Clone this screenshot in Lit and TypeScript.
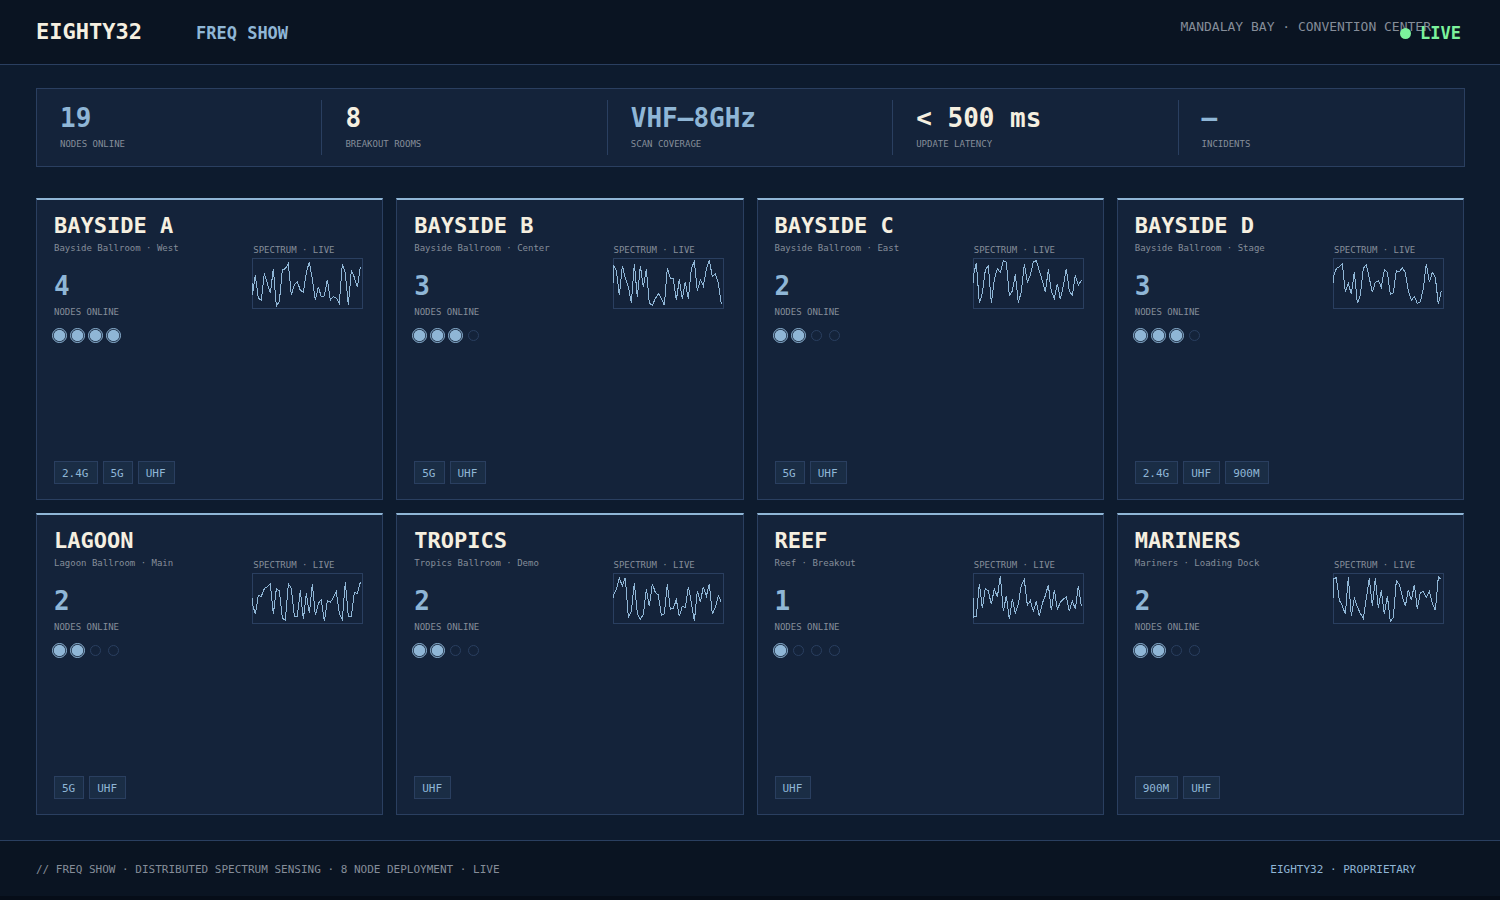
import { LitElement, html, css, svg } from "lit";
import { customElement, property } from "lit/decorators.js";

interface Room {
  name: string;
  place: string;
  nodes: number;
  bands: string[];
  samples: number[];
}

const NODE_SLOTS = 4;

const STATS = [
  { value: "19", label: "NODES ONLINE", tone: "blue" },
  { value: "8", label: "BREAKOUT ROOMS", tone: "cream" },
  { value: "VHF—8GHz", label: "SCAN COVERAGE", tone: "blue" },
  { value: "< 500 ms", label: "UPDATE LATENCY", tone: "cream" },
  { value: "—", label: "INCIDENTS", tone: "blue" },
];

const ROOMS: Room[] = [
  {
    name: "BAYSIDE A",
    place: "Bayside Ballroom · West",
    nodes: 4,
    bands: ["2.4G", "5G", "UHF"],
    samples: [165, 106, 175, 181, 100, 130, 160, 86, 198, 185, 90, 86, 71, 165, 134, 125, 151, 157, 98, 65, 118, 181, 140, 171, 168, 119, 180, 170, 174, 190, 71, 100, 196, 90, 112, 142, 80],
  },
  {
    name: "BAYSIDE B",
    place: "Bayside Ballroom · Center",
    nodes: 3,
    bands: ["5G", "UHF"],
    samples: [76, 91, 166, 77, 115, 140, 188, 71, 172, 77, 142, 88, 190, 196, 176, 160, 176, 196, 83, 115, 116, 181, 118, 178, 125, 178, 85, 65, 153, 119, 138, 88, 61, 110, 101, 130, 193],
  },
  {
    name: "BAYSIDE C",
    place: "Bayside Ballroom · East",
    nodes: 2,
    bands: ["5G", "UHF"],
    samples: [108, 68, 190, 160, 90, 77, 190, 118, 86, 97, 62, 66, 166, 153, 103, 188, 155, 73, 127, 105, 66, 62, 92, 122, 157, 88, 155, 175, 131, 178, 137, 86, 154, 166, 106, 136, 121],
  },
  {
    name: "BAYSIDE D",
    place: "Bayside Ballroom · Stage",
    nodes: 3,
    bands: ["2.4G", "UHF", "900M"],
    samples: [110, 86, 80, 71, 157, 130, 163, 95, 190, 165, 85, 74, 115, 157, 127, 122, 142, 89, 97, 163, 158, 92, 95, 83, 98, 152, 181, 170, 190, 186, 145, 71, 127, 97, 112, 193, 152],
  },
  {
    name: "LAGOON",
    place: "Lagoon Ballroom · Main",
    nodes: 2,
    bands: ["5G", "UHF"],
    samples: [145, 178, 121, 124, 101, 95, 86, 178, 101, 107, 190, 196, 86, 100, 184, 184, 106, 193, 115, 175, 86, 181, 145, 134, 199, 137, 142, 128, 110, 175, 194, 80, 184, 184, 112, 116, 82],
  },
  {
    name: "TROPICS",
    place: "Tropics Ballroom · Demo",
    nodes: 2,
    bands: ["UHF"],
    samples: [120, 103, 70, 92, 68, 187, 170, 83, 175, 193, 178, 103, 154, 86, 112, 120, 181, 176, 88, 163, 160, 134, 184, 154, 157, 95, 142, 199, 107, 142, 95, 124, 86, 178, 157, 122, 142],
  },
  {
    name: "REEF",
    place: "Reef · Breakout",
    nodes: 1,
    bands: ["UHF"],
    samples: [187, 184, 86, 160, 100, 108, 148, 101, 127, 62, 169, 122, 193, 131, 175, 148, 90, 74, 151, 137, 169, 139, 184, 145, 122, 89, 166, 104, 163, 142, 133, 125, 169, 137, 163, 92, 152],
  },
  {
    name: "MARINERS",
    place: "Mariners · Loading Dock",
    nodes: 2,
    bands: ["900M", "UHF"],
    samples: [72, 68, 136, 152, 178, 65, 184, 130, 155, 175, 190, 130, 70, 154, 70, 160, 106, 178, 122, 199, 187, 77, 88, 124, 154, 104, 136, 89, 163, 112, 110, 128, 110, 145, 166, 66, 73],
  },
];

@customElement("room-card")
class RoomCard extends LitElement {
  @property({ attribute: false }) room!: Room;

  static styles = css`
    :host {
      display: flex;
      flex-direction: column;
      box-sizing: border-box;
      min-width: 0;
      padding: 13px 19px 15px 17px;
      background: #14233a;
      border: 1px solid #2a3f60;
      border-top: 2px solid #8fb6d6;
    }
    .body {
      display: flex;
      justify-content: space-between;
      flex: 1;
    }
    .name {
      margin: 0;
      font-size: 22px;
      line-height: 26px;
      font-weight: 700;
      color: #f5efe0;
    }
    .place,
    .caption {
      margin: 0;
      font-size: 9px;
      line-height: 12px;
      color: #858d99;
    }
    .place {
      margin-top: 3px;
    }
    .count {
      margin: 17px 0 0;
      font-size: 26px;
      line-height: 30px;
      font-weight: 700;
      color: #8fb6d6;
    }
    .count + .caption {
      margin-top: 5px;
    }
    .dots {
      display: block;
      margin-top: 10px;
      overflow: visible;
    }
    .on {
      fill: #8fb6d6;
    }
    .ring {
      fill: none;
      stroke: #8fb6d6;
    }
    .off {
      fill: none;
      stroke: #2a3f60;
    }
    .spectrum {
      flex: none;
      margin: 31px 0 0;
    }
    .spectrum .caption {
      padding-left: 1px;
    }
    .plot {
      display: block;
      box-sizing: border-box;
      width: 111px;
      height: 51px;
      margin-top: 2px;
      border: 1px solid #2a3f60;
      overflow: visible;
    }
    .trace {
      fill: none;
      stroke: #8fb6d6;
      stroke-width: 3;
      shape-rendering: crispEdges;
    }
    .bands {
      display: flex;
      flex-wrap: wrap;
      gap: 5px;
      margin: 0;
      padding: 0;
      list-style: none;
    }
    .band {
      padding: 5px 8px 3px 7px;
      font-size: 11px;
      line-height: 13px;
      color: #8fb6d6;
      background: #1a2d45;
      border: 1px solid #2a3f60;
    }
  `;

  render() {
    const { name, place, nodes, bands, samples } = this.room;
    const trace = ["0,130", ...samples.map((y, i) => `${i * 9},${y}`)].join(" ");
    return html`
      <div class="body">
        <div>
          <h2 class="name">${name}</h2>
          <p class="place">${place}</p>
          <p class="count">${nodes}</p>
          <p class="caption">NODES ONLINE</p>
          <svg class="dots" width="66" height="15" role="img" aria-label="${nodes} of ${NODE_SLOTS} nodes">
            ${Array.from({ length: NODE_SLOTS }, (_, i) => {
              const cx = 5.5 + i * 18;
              return i < nodes
                ? svg`<circle class="on" cx=${cx} cy="7.5" r="5.8"></circle>
                    <circle class="ring" cx=${cx} cy="7.5" r="7"></circle>`
                : svg`<circle class="off" cx=${cx} cy="7.5" r="5"></circle>`;
            })}
          </svg>
        </div>
        <figure class="spectrum">
          <figcaption class="caption">SPECTRUM · LIVE</figcaption>
          <svg class="plot" viewBox="2 57 327 147" aria-hidden="true">
            <polyline class="trace" points=${trace}></polyline>
          </svg>
        </figure>
      </div>
      <ul class="bands">
        ${bands.map((band) => html`<li class="band">${band}</li>`)}
      </ul>
    `;
  }
}

@customElement("app-root")
class AppRoot extends LitElement {
  static styles = css`
    :host {
      display: flex;
      flex-direction: column;
      box-sizing: border-box;
      min-height: 100vh;
      background: #0d1b2e;
      font-family: "DejaVu Sans Mono", monospace;
    }
    .top {
      position: relative;
      display: flex;
      align-items: center;
      height: 64px;
      padding: 0 69px 0 36px;
      background: #0a1422;
      border-bottom: 1px solid #2a3f60;
    }
    .brand {
      margin: 0;
      font-size: 22px;
      line-height: 26px;
      font-weight: 700;
      color: #f5efe0;
    }
    .product {
      margin-left: 54px;
      padding-top: 2px;
      font-size: 17px;
      line-height: 20px;
      font-weight: 700;
      color: #8fb6d6;
    }
    .venue {
      margin-left: auto;
      padding-bottom: 10px;
      font-size: 13px;
      line-height: 16px;
      color: #858d99;
    }
    .live {
      position: absolute;
      top: 23px;
      right: 39px;
      display: flex;
      align-items: center;
      gap: 9px;
      font-size: 17px;
      line-height: 20px;
      font-weight: 700;
      color: #7cf29c;
    }
    .lamp {
      width: 11px;
      height: 11px;
      border-radius: 50%;
      background: #7cf29c;
    }
    .main {
      display: flex;
      flex-direction: column;
      flex: 1;
      gap: 31px;
      padding: 23px 35px 25px 36px;
    }
    .stats {
      display: grid;
      grid-template-columns: repeat(5, 1fr);
      margin: 0;
      padding: 11px 0;
      background: #14233a;
      border: 1px solid #2a3f60;
    }
    .stat {
      display: flex;
      flex-direction: column-reverse;
      justify-content: flex-end;
      gap: 5px;
      box-sizing: border-box;
      height: 55px;
      padding: 3px 0 0 23px;
      border-right: 1px solid #2a3f60;
    }
    .stat:last-child {
      border-right: 0;
    }
    .stat-label {
      font-size: 9px;
      line-height: 12px;
      color: #858d99;
    }
    .stat-value {
      margin: 0;
      font-size: 26px;
      line-height: 30px;
      font-weight: 700;
    }
    .blue {
      color: #8fb6d6;
    }
    .cream {
      color: #f5efe0;
    }
    .rooms {
      display: grid;
      grid-template-columns: repeat(4, 1fr);
      grid-auto-rows: 1fr;
      gap: 13px;
      flex: 1;
      padding-right: 1px;
    }
    .foot {
      display: flex;
      align-items: center;
      justify-content: space-between;
      box-sizing: border-box;
      height: 60px;
      padding: 2px 84px 0 36px;
      font-size: 11px;
      line-height: 14px;
      color: #858d99;
      background: #0a1422;
      border-top: 1px solid #2a3f60;
      border-bottom: 4px solid #060d18;
    }
  `;

  render() {
    return html`
      <header class="top">
        <h1 class="brand">EIGHTY32</h1>
        <span class="product">FREQ SHOW</span>
        <span class="venue">MANDALAY BAY · CONVENTION CENTER</span>
        <span class="live"><i class="lamp"></i>LIVE</span>
      </header>
      <main class="main">
        <dl class="stats">
          ${STATS.map(
            (s) => html`<div class="stat">
              <dt class="stat-label">${s.label}</dt>
              <dd class="stat-value ${s.tone}">${s.value}</dd>
            </div>`
          )}
        </dl>
        <section class="rooms">
          ${ROOMS.map((room) => html`<room-card .room=${room}></room-card>`)}
        </section>
      </main>
      <footer class="foot">
        <span>// FREQ SHOW · DISTRIBUTED SPECTRUM SENSING · 8 NODE DEPLOYMENT · LIVE</span>
        <span class="blue">EIGHTY32 · PROPRIETARY</span>
      </footer>
    `;
  }
}
